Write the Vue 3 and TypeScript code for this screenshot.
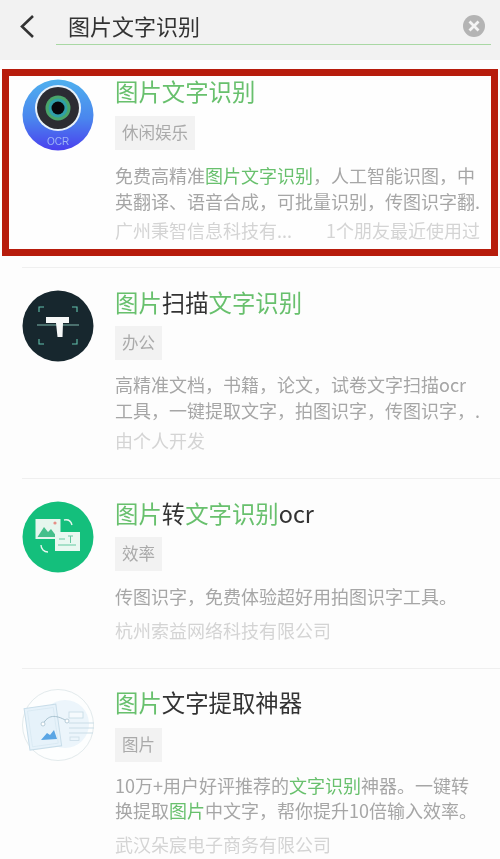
<script setup lang="ts">
interface Seg { t: string; hl?: boolean }
interface App {
  key: string
  icon: 'ocr' | 'scan' | 'swap' | 'doc'
  title: Seg[]
  tag: string
  desc: Seg[][]
  company: string
  friend?: string
}

const apps: App[] = [
  {
    key: 'a', icon: 'ocr',
    title: [{ t: '图片文字识别', hl: true }],
    tag: '休闲娱乐',
    desc: [
      [{ t: '免费高精准' }, { t: '图片文字识别', hl: true }, { t: '，人工智能识图，中' }],
      [{ t: '英翻译、语音合成，可批量识别，传图识字翻.' }],
    ],
    company: '广州秉智信息科技有...',
    friend: '1个朋友最近使用过',
  },
  {
    key: 'b', icon: 'scan',
    title: [{ t: '图片', hl: true }, { t: '扫描' }, { t: '文字识别', hl: true }],
    tag: '办公',
    desc: [
      [{ t: '高精准文档，书籍，论文，试卷文字扫描ocr' }],
      [{ t: '工具，一键提取文字，拍图识字，传图识字，.' }],
    ],
    company: '由个人开发',
  },
  {
    key: 'c', icon: 'swap',
    title: [{ t: '图片', hl: true }, { t: '转' }, { t: '文字识别', hl: true }, { t: 'ocr' }],
    tag: '效率',
    desc: [[{ t: '传图识字，免费体验超好用拍图识字工具。' }]],
    company: '杭州索益网络科技有限公司',
  },
  {
    key: 'd', icon: 'doc',
    title: [{ t: '图片', hl: true }, { t: '文字提取神器' }],
    tag: '图片',
    desc: [
      [{ t: '10万+用户好评推荐的' }, { t: '文字识别', hl: true }, { t: '神器。一键转' }],
      [{ t: '换提取' }, { t: '图片', hl: true }, { t: '中文字，帮你提升10倍输入效率。' }],
    ],
    company: '武汉朵宸电子商务有限公司',
  },
]
</script>

<template>
  <div class="page">
    <header class="search">
      <svg class="back" width="18" height="26" viewBox="0 0 18 26">
        <path d="M13 2 L2 12.5 L13 23" fill="none" stroke="#333" stroke-width="2.6" />
      </svg>
      <div class="field">
        <span class="query">图片文字识别</span>
        <svg class="clear" width="24" height="24" viewBox="0 0 24 24">
          <circle cx="12" cy="12" r="11" fill="#b4b4b4" />
          <path d="M7.5 7.5 L16.5 16.5 M16.5 7.5 L7.5 16.5" stroke="#f4f4f4" stroke-width="2.8" />
        </svg>
      </div>
    </header>

    <section
      v-for="(app, i) in apps"
      :key="app.key"
      class="row"
      :class="[`row-${app.key}`, { boxed: i === 0 }]"
    >
      <svg class="icon" width="72" height="72" viewBox="0 0 72 72">
        <template v-if="app.icon === 'ocr'">
          <defs>
            <linearGradient id="ocrBg" x1="0" y1="0" x2="0" y2="1">
              <stop offset="0" stop-color="#4fb0ee" />
              <stop offset="0.55" stop-color="#4a86ee" />
              <stop offset="1" stop-color="#4a40ee" />
            </linearGradient>
          </defs>
          <circle cx="36" cy="36" r="35.5" fill="url(#ocrBg)" />
          <circle cx="36" cy="29" r="23" fill="#e8f2fb" />
          <circle cx="36" cy="29" r="21" fill="#2c2c33" />
          <circle cx="36" cy="29" r="12.5" fill="#4aa56a" />
          <circle cx="36" cy="29" r="9.5" fill="#2f9fa8" />
          <circle cx="36" cy="29" r="6.5" fill="#08080c" />
          <text x="36" y="66" text-anchor="middle" class="ocr-text">OCR</text>
        </template>
        <template v-else-if="app.icon === 'scan'">
          <circle cx="36" cy="36" r="35.5" fill="#17272e" />
          <path
            d="M17 22 V17 H22 M50 17 H55 V22 M17 49 V54 H22 M50 54 H55 V49"
            fill="none" stroke="#62c2ad" stroke-width="1.1"
          />
          <path d="M15 35 H57" stroke="#7fb8ac" stroke-width="1" />
          <path d="M24 27 H47 V33 H41 L40.5 47 H35.5 L34 33 H24 Z" fill="#f6f8f8" />
        </template>
        <template v-else-if="app.icon === 'swap'">
          <circle cx="36" cy="36" r="35.5" fill="#14bf7c" />
          <rect x="13.5" y="18" width="25" height="20" fill="#e6f6ee" />
          <path d="M15.5 36 L22 26 L26 31 L29 28 L35 36 Z" fill="#45bf8b" />
          <circle cx="33" cy="22" r="1.6" fill="#e68f86" />
          <rect x="33" y="31" width="25" height="19" fill="#e9f8f1" />
          <path d="M37 38 H43 M36 44 H54" stroke="#63c9a0" stroke-width="1" />
          <path d="M46 35 H51 M48.5 35 V42" stroke="#63c9a0" stroke-width="1" fill="none" />
          <path d="M42 19 C46 18 49 20 50 24" fill="none" stroke="#e6f6ee" stroke-width="1.4" />
          <path d="M19 44 C19 48 22 51 26 51" fill="none" stroke="#e6f6ee" stroke-width="1.4" />
        </template>
        <template v-else>
          <circle cx="36" cy="36" r="35.5" fill="#fdfefe" stroke="#e2eaec" stroke-width="1" />
          <ellipse cx="43" cy="35" rx="24" ry="24" fill="#ecf5fb" />
          <g transform="rotate(-8 22 39)">
            <rect x="5" y="17" width="32" height="42" fill="#e6f2fa" stroke="#c8dde9" stroke-width="1" />
            <rect x="8" y="20" width="26" height="36" fill="none" stroke="#d8e8f2" stroke-width="0.8" />
          </g>
          <path d="M19 51 L25 44 L28 46 L32 41 L35 50 Z" fill="#5aa5e4" />
          <path d="M21 35 C26 26 33 25 45 32" fill="none" stroke="#a8c2cf" stroke-width="1" />
          <circle cx="21" cy="35" r="2" fill="#fff" stroke="#a8c2cf" stroke-width="0.8" />
          <circle cx="45" cy="32" r="2" fill="#fff" stroke="#a8c2cf" stroke-width="0.8" />
          <rect x="47" y="23" width="14" height="6" fill="#f5fafd" stroke="#c4d9e4" stroke-width="0.8" />
          <path d="M47 34 H72 M47 39 H72 M47 44 H71" stroke="#cadde7" stroke-width="1" />
          <rect x="48" y="48" width="9" height="3.5" fill="none" stroke="#cadde7" stroke-width="0.8" />
        </template>
      </svg>

      <div class="body">
        <h2 class="title">
          <span v-for="(s, si) in app.title" :key="si" :class="{ hl: s.hl }">{{ s.t }}</span>
        </h2>
        <div class="tag">{{ app.tag }}</div>
        <div class="desc">
          <div v-for="(line, li) in app.desc" :key="li" class="line">
            <span v-for="(s, si) in line" :key="si" :class="{ hl: s.hl }">{{ s.t }}</span>
          </div>
        </div>
        <div class="meta">
          <span>{{ app.company }}</span>
          <span v-if="app.friend">{{ app.friend }}</span>
        </div>
      </div>
    </section>
  </div>
</template>

<style scoped>
.page {
  width: 500px;
  height: 859px;
  overflow: hidden;
  background: #fdfdfd;
  font-family: "Noto Sans CJK SC", "Noto Sans", sans-serif;
  filter: blur(0.45px);
}
.search {
  height: 60px;
  box-sizing: border-box;
  background: #f2f2f2;
  display: flex;
  padding: 0 9px 0 20px;
  gap: 18px;
}
.back {
  margin-top: 14px;
  flex: none;
}
.field {
  flex: 1;
  height: 45px;
  box-sizing: border-box;
  border-bottom: 1.5px solid #a9d8a4;
  display: flex;
  justify-content: space-between;
  padding: 0 5px 0 12px;
}
.query {
  font-size: 22px;
  line-height: 50px;
  height: 44px;
  color: #333;
}
.clear {
  margin-top: 14px;
}
.row {
  display: flex;
  gap: 21px;
  margin-left: 22px;
  padding: 19px 0 25px;
  border-top: 1px solid #efefef;
}
.row.boxed {
  margin: 9px 2px 11px;
  padding: 0 0 6px 13px;
  border: 7px solid #b71c0c;
  background: #fefefe;
}
.icon {
  flex: none;
  margin-top: 3px;
}
.body {
  flex: 1;
  min-width: 0;
  padding-right: 18px;
}
.boxed .body {
  padding-right: 11px;
}
.title {
  margin: 0;
  font-size: 23.4px;
  font-weight: 400;
  line-height: 30px;
  color: #333;
  white-space: nowrap;
}
.tag {
  display: inline-block;
  vertical-align: top;
  margin-top: 9px;
  height: 34px;
  line-height: 33px;
  padding: 0 7px;
  background: #f2f2f2;
  color: #aaa;
  font-size: 16.5px;
}
.desc {
  margin-top: 12px;
  font-size: 18px;
  line-height: 25.5px;
  color: #a6a6a6;
  white-space: nowrap;
}
.meta {
  margin-top: 4px;
  display: flex;
  justify-content: space-between;
  font-size: 18px;
  line-height: 26px;
  color: #d4d4d4;
  white-space: nowrap;
}
.row-a .tag {
  margin-top: 10px;
}
.row-a .desc {
  margin-top: 13px;
}
.row-a .meta {
  margin-top: 3px;
}
.row-c .desc {
  margin-top: 13px;
}
.row-c .meta {
  margin-top: 7px;
}
.row-d {
  padding-top: 18px;
}
.row-d .icon {
  margin-top: 2px;
}
.row-d .tag {
  margin-top: 11px;
}
.row-d .desc {
  margin-top: 11px;
}
.row-d .meta {
  margin-top: 7px;
}
.hl {
  color: #68c06d;
}
.ocr-text {
  font-family: "Liberation Sans", sans-serif;
  font-size: 10px;
  fill: #9db4f5;
}
</style>

<style>
html, body {
  background: #fdfdfd;
}
</style>
